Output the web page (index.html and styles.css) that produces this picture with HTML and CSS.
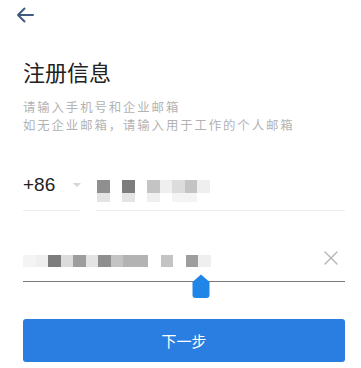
FILE: index.html
```html
<!DOCTYPE html>
<html lang="zh">
<head>
<meta charset="utf-8">
<link rel="stylesheet" href="styles.css">
</head>
<body>
<div class="page">
  <div class="topbar">
    <svg class="back" width="18" height="16" viewBox="0 0 18 16"><path d="M17 8H2M8.5 1.5L2 8l6.5 6.5" fill="none" stroke="#3f5b80" stroke-width="2" stroke-linecap="round" stroke-linejoin="round"/></svg>
  </div>
  <main class="content">
    <h1 class="title">注册信息</h1>
    <p class="hint">请输入手机号和企业邮箱<br>如无企业邮箱，请输入用于工作的个人邮箱</p>

    <div class="phone-row">
      <div class="cc">
        <span class="cc-text">+86</span>
        <span class="caret"></span>
      </div>
      <div class="phone">
        <div class="mosaic">
          <span class="c2"></span><span></span><span class="c1"></span><span></span><span class="c4"></span><span class="c7"></span><span class="c5"></span><span class="c4"></span><span class="c7"></span>
          <span class="c6"></span><span></span><span class="c6"></span><span></span><span class="c7"></span><span></span><span class="c8"></span><span class="c8"></span><span></span>
        </div>
      </div>
    </div>

    <div class="email-row">
      <div class="mosaic mail">
        <span class="c8"></span><span class="c7"></span><span class="c1"></span><span class="c5"></span><span class="c3"></span><span class="c6"></span><span class="c2"></span><span class="c4"></span><span class="c3b"></span><span class="c3b"></span><span></span><span class="c4"></span><span></span><span class="c3"></span><span class="c7"></span>
      </div>
      <svg class="clear" width="14" height="14" viewBox="0 0 14 14"><path d="M1 1l12 12M13 1L1 13" stroke="#b5b5b5" stroke-width="1.4" stroke-linecap="round"/></svg>
      <svg class="handle" width="18" height="24" viewBox="0 0 18 24"><path d="M9 0.5L17.5 8V21a3 3 0 0 1-3 3H3.5a3 3 0 0 1-3-3V8z" fill="#1f86e8"/></svg>
    </div>

    <button class="next">下一步</button>
  </main>
</div>
</body>
</html>
```
FILE: styles.css
```css
* { box-sizing: border-box; }
html, body { margin: 0; padding: 0; background: #fff; }
body {
  width: 361px;
  height: 368px;
  overflow: hidden;
  font-family: "Noto Sans CJK SC", "Noto Sans", sans-serif;
  color: #222;
}
.topbar {
  height: 30px;
  padding: 7px 0 0 16px;
}
.back { display: block; }
.content {
  padding: 0 16px 0 23px;
}
.title {
  margin: 26px 0 0;
  font-size: 22px;
  font-weight: 400;
  line-height: 30px;
  color: #222;
}
.hint {
  margin: 12px 0 0;
  font-size: 12.4px;
  line-height: 18px;
  color: #b3b3b3;
  letter-spacing: 1.9px;
}
.phone-row {
  display: flex;
  gap: 16px;
  margin-top: 34px;
  height: 43px;
}
.cc {
  width: 57px;
  display: flex;
  align-items: center;
  align-self: stretch;
  gap: 18px;
  border-bottom: 1px solid #ececec;
  padding-bottom: 8px;
}
.cc-text {
  font-family: "Liberation Sans", Arial, sans-serif;
  font-size: 19px;
  color: #222;
}
.caret {
  width: 0; height: 0;
  border-left: 4px solid transparent;
  border-right: 4px solid transparent;
  border-top: 4px solid #d6d6d6;
}
.phone {
  flex: 1;
  border-bottom: 1px solid #ececec;
  padding: 12px 0 0 1px;
}
.mosaic {
  display: grid;
  grid-template-columns: repeat(9, 12.5px);
  grid-auto-rows: 13px;
}
.phone .mosaic { grid-template-rows: 13px 9px; }
.c1 { background: #7d7d7d; }
.c2 { background: #8f8f8f; }
.c3 { background: #9d9d9d; }
.c3b { background: #b3b3b3; }
.c4 { background: #c4c4c4; }
.c5 { background: #dcdcdc; }
.c6 { background: #e4e4e4; }
.c7 { background: #efefef; }
.c8 { background: #f4f4f4; }
.email-row {
  position: relative;
  margin-top: 19px;
  height: 52px;
  border-bottom: 1px solid #7a7a7a;
  display: flex;
  align-items: flex-start;
  justify-content: space-between;
  padding-top: 25px;
}
.mosaic.mail {
  grid-template-columns: repeat(15, 12.5px);
  grid-template-rows: 12px;
}
.clear { margin: -4px 7px 0 0; }
.handle {
  position: absolute;
  left: 169px;
  top: 44px;
}
.next {
  display: block;
  width: 322px;
  height: 43px;
  margin-top: 37px;
  border: none;
  border-radius: 3px;
  background: #2a7de1;
  color: #fff;
  font-family: "Noto Sans CJK SC", sans-serif;
  font-size: 15px;
  padding: 0;
}
```
